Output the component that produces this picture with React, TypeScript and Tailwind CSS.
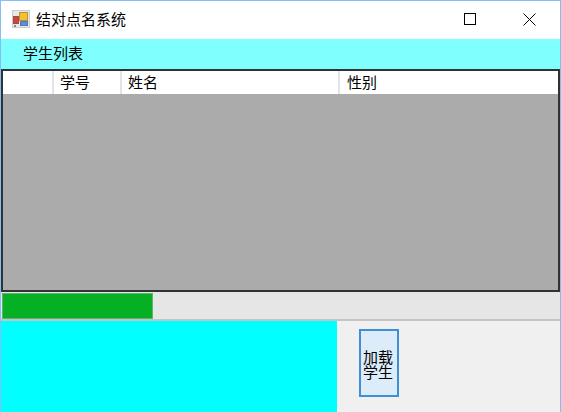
export default function App() {
  const font = { fontFamily: '"Noto Sans CJK SC", sans-serif' };
  return (
    <div className="w-[561px] h-[412px] flex flex-col border-x border-t border-[#86bdf5] bg-[#f0f0f0] overflow-hidden text-[15px] text-black" style={font}>
      <div className="h-[38px] shrink-0 bg-white flex items-center">
        <svg className="ml-[11px] mt-[-3px]" width="18" height="18" viewBox="0 0 18 18">
          <rect x="0.5" y="0.5" width="17" height="17" fill="#e8e8e8" stroke="#cccccc" />
          <rect x="7.5" y="2.5" width="8" height="8" fill="#f6c02c" stroke="#b8923a" />
          <rect x="1.5" y="6.5" width="5" height="7" fill="#d0443c" stroke="#a04a4a" />
          <rect x="8.5" y="11.5" width="7" height="4" fill="#5a8fdc" stroke="#4a78b8" />
          <rect x="2" y="15" width="2" height="2" fill="#8a8a8a" />
        </svg>
        <span className="ml-[6px] leading-[20px] mt-[-3px]">结对点名系统</span>
        <div className="ml-auto flex items-center mt-[-2px]">
          <svg className="mr-[47px]" width="12" height="12" viewBox="0 0 12 12">
            <rect x="0.5" y="0.5" width="11" height="11" fill="none" stroke="#000" />
          </svg>
          <svg className="mr-[24px]" width="13" height="13" viewBox="0 0 13 13">
            <path d="M0.5 0.5 L12.5 12.5 M12.5 0.5 L0.5 12.5" stroke="#000" strokeWidth="1" fill="none" />
          </svg>
        </div>
      </div>
      <div className="h-[30px] shrink-0 bg-[#80ffff] pl-[22px] flex items-center">
        <span className="leading-[20px] mt-[-2px]">学生列表</span>
      </div>
      <div className="h-[223px] shrink-0 border-2 border-[#303336] bg-[#ababab]">
        <div className="h-[23px] bg-white flex leading-[22px] text-black">
          <div className="w-[51px] border-r-2 border-[#e4e4e4]" />
          <div className="w-[68px] pl-[6px] border-r-2 border-[#e4e4e4]">学号</div>
          <div className="w-[218px] pl-[6px] border-r-2 border-[#e4e4e4]">姓名</div>
          <div className="flex-1 pl-[7px]">性别</div>
        </div>
      </div>
      <div className="h-[29px] shrink-0 bg-[#e6e6e6] border-b-2 border-[#c4c4c4] flex pt-[1px]">
        <div className="w-[151px] h-full ml-[1px] bg-[#06b025] border border-[#5fb36b]" />
      </div>
      <div className="flex-1 flex min-h-0">
        <div className="w-[336px] bg-[#00ffff]" />
        <div className="flex-1 pl-[22px] pt-[8px]">
          <button className="w-[40px] h-[68px] border-2 border-[#3f8fd2] bg-[#dcecf9] text-center leading-[15px] text-[15px] pt-[1px] pr-[2px]">
            加载<br />学生
          </button>
        </div>
      </div>
    </div>
  );
}
